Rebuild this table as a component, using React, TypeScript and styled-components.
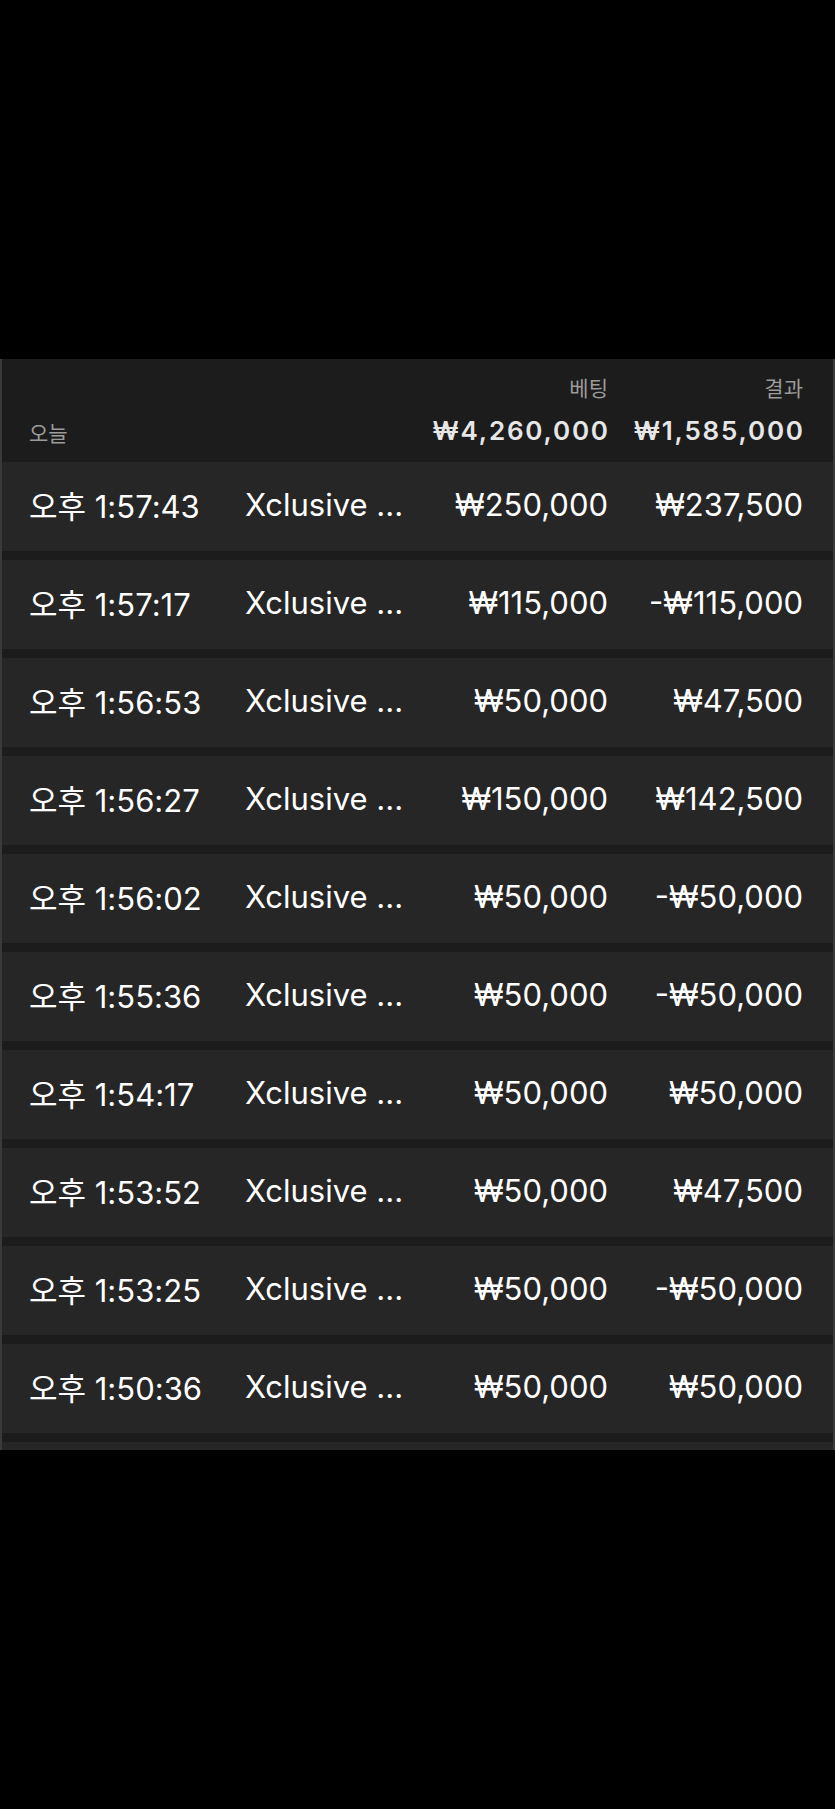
import React from 'react';
import styled, { createGlobalStyle } from 'styled-components';

const GlobalStyle = createGlobalStyle`
  html, body {
    margin: 0;
    padding: 0;
    background: #000;
  }
  body {
    font-family: 'Inter', 'Noto Sans CJK KR', sans-serif;
    -webkit-font-smoothing: antialiased;
  }
`;

const Page = styled.div`
  width: 835px;
  height: 1809px;
  padding-top: 359px;
  box-sizing: border-box;
  background: #000;
`;

const Panel = styled.div`
  height: 1091px;
  overflow: hidden;
  background: #1c1c1c;
  border-left: 2px solid #3a3a3a;
  border-right: 2px solid #3a3a3a;
  box-sizing: border-box;
`;

const grid = `
  display: grid;
  grid-template-columns: 216px 1fr 200px 195px;
  padding: 0 30px 0 27px;
`;

const Header = styled.div`
  ${grid}
  grid-template-rows: 24px 34px;
  row-gap: 14px;
  padding-top: 16px;
  padding-bottom: 15px;
  align-items: center;
`;

const Label = styled.div<{ $col: number }>`
  grid-column: ${(p) => p.$col};
  grid-row: 1;
  text-align: right;
  font-size: 21px;
  color: #9b9b9b;
`;

const TodayLabel = styled.div`
  grid-column: 1;
  grid-row: 2;
  align-self: end;
  font-size: 21px;
  color: #9b9b9b;
`;

const Total = styled.div<{ $col: number }>`
  grid-column: ${(p) => p.$col};
  grid-row: 2;
  justify-self: end;
  font-size: 26px;
  font-weight: 600;
  letter-spacing: 1.8px;
  margin-right: -1.8px;
  color: #e6e6e6;
  white-space: nowrap;
`;

const List = styled.div`
  display: flex;
  flex-direction: column;
  gap: 9px;
`;

const Row = styled.div`
  ${grid}
  height: 89px;
  box-sizing: border-box;
  padding-bottom: 4px;
  flex-shrink: 0;
  align-items: center;
  background: #262626;
  color: #fff;
  font-size: 31px;
  white-space: nowrap;
`;

const Cell = styled.div<{ $right?: boolean }>`
  text-align: ${(p) => (p.$right ? 'right' : 'left')};
`;

type Bet = { time: string; bet: string; result: string };

const bets: Bet[] = [
  { time: '1:57:43', bet: '₩250,000', result: '₩237,500' },
  { time: '1:57:17', bet: '₩115,000', result: '-₩115,000' },
  { time: '1:56:53', bet: '₩50,000', result: '₩47,500' },
  { time: '1:56:27', bet: '₩150,000', result: '₩142,500' },
  { time: '1:56:02', bet: '₩50,000', result: '-₩50,000' },
  { time: '1:55:36', bet: '₩50,000', result: '-₩50,000' },
  { time: '1:54:17', bet: '₩50,000', result: '₩50,000' },
  { time: '1:53:52', bet: '₩50,000', result: '₩47,500' },
  { time: '1:53:25', bet: '₩50,000', result: '-₩50,000' },
  { time: '1:50:36', bet: '₩50,000', result: '₩50,000' },
];

export default function App() {
  return (
    <>
      <GlobalStyle />
      <Page>
        <Panel>
          <Header>
            <Label $col={3}>베팅</Label>
            <Label $col={4}>결과</Label>
            <TodayLabel>오늘</TodayLabel>
            <Total $col={3}>₩4,260,000</Total>
            <Total $col={4}>₩1,585,000</Total>
          </Header>
          <List>
            {bets.map((b, i) => (
              <Row key={i}>
                <Cell>오후 {b.time}</Cell>
                <Cell>Xclusive ...</Cell>
                <Cell $right>{b.bet}</Cell>
                <Cell $right>{b.result}</Cell>
              </Row>
            ))}
            <Row />
          </List>
        </Panel>
      </Page>
    </>
  );
}
